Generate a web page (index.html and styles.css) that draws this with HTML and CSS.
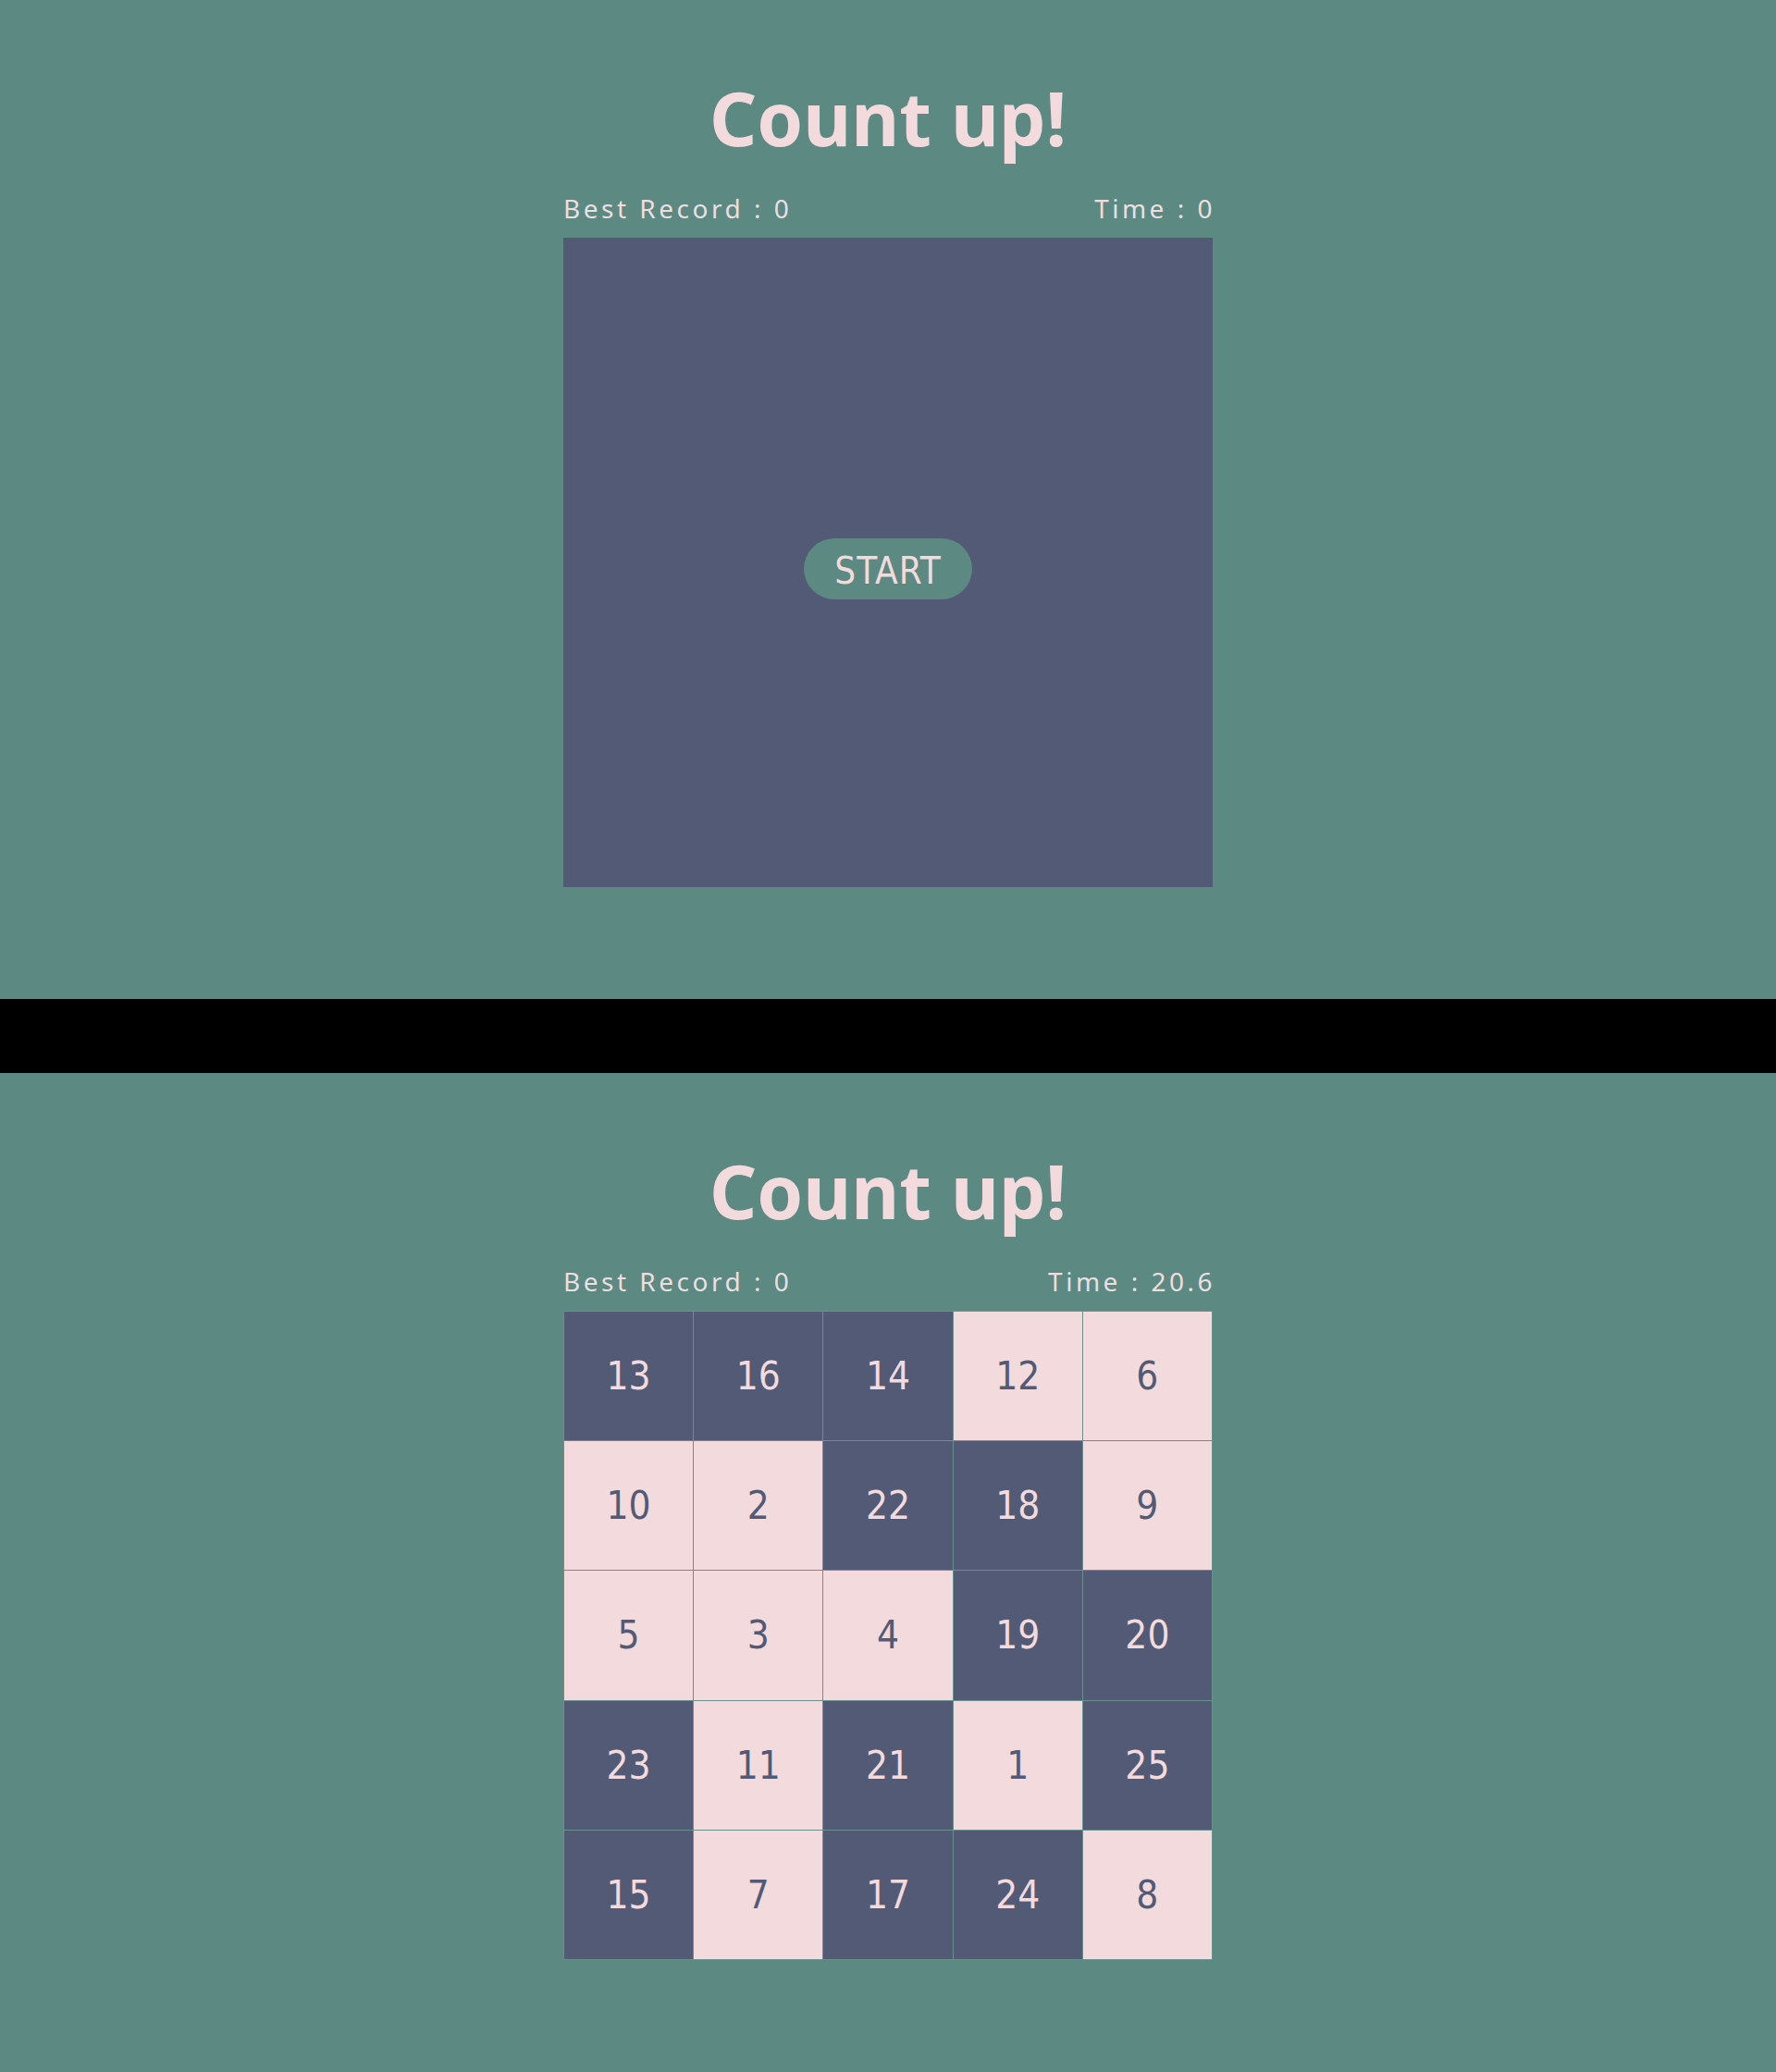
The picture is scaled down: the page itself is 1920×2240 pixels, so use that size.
FILE: index.html
```html
<!DOCTYPE html>
<html lang="en">
<head>
<meta charset="utf-8">
<title>Count up!</title>
<link rel="stylesheet" href="styles.css">
</head>
<body>
<section class="screen">
  <h1 class="title">Count up!</h1>
  <div class="stats">
    <span class="stat">Best Record : 0</span>
    <span class="stat">Time : 0</span>
  </div>
  <div class="board board-idle">
    <button class="start-btn">START</button>
  </div>
</section>
<div class="divider"></div>
<section class="screen">
  <h1 class="title">Count up!</h1>
  <div class="stats">
    <span class="stat">Best Record : 0</span>
    <span class="stat">Time : 20.6</span>
  </div>
  <div class="board board-grid">
    <div class="cell dark">13</div>
    <div class="cell dark">16</div>
    <div class="cell dark">14</div>
    <div class="cell light">12</div>
    <div class="cell light">6</div>
    <div class="cell light">10</div>
    <div class="cell light">2</div>
    <div class="cell dark">22</div>
    <div class="cell dark">18</div>
    <div class="cell light">9</div>
    <div class="cell light">5</div>
    <div class="cell light">3</div>
    <div class="cell light">4</div>
    <div class="cell dark">19</div>
    <div class="cell dark">20</div>
    <div class="cell dark">23</div>
    <div class="cell light">11</div>
    <div class="cell dark">21</div>
    <div class="cell light">1</div>
    <div class="cell dark">25</div>
    <div class="cell dark">15</div>
    <div class="cell light">7</div>
    <div class="cell dark">17</div>
    <div class="cell dark">24</div>
    <div class="cell light">8</div>
  </div>
</section>
</body>
</html>
```

FILE: styles.css
```css
html, body {
  margin: 0;
  padding: 0;
}
body {
  background: #000;
  width: 1920px;
}
.screen {
  height: 1080px;
  background: #5c8982;
  display: flex;
  flex-direction: column;
  align-items: center;
  padding-top: 87px;
  box-sizing: border-box;
}
.divider {
  height: 80px;
  background: #000;
}
.title {
  margin: 0;
  font-family: "Noto Sans", "Open Sans", sans-serif;
  font-weight: 700;
  font-size: 80px;
  line-height: 80px;
  color: #f2dadd;
  letter-spacing: 0;
}
.stats {
  width: 702px;
  margin-top: 44px;
  display: flex;
  justify-content: space-between;
  font-family: "Noto Sans", "Open Sans", sans-serif;
  font-size: 28px;
  line-height: 28px;
  letter-spacing: 3.5px;
  color: #ecdfe0;
}
.stat:last-child {
  margin-right: -3px;
}
.board {
  width: 702px;
  height: 702px;
  margin-top: 18px;
  box-sizing: border-box;
}
.board-idle {
  background: #525a75;
  display: flex;
  align-items: center;
  justify-content: center;
}
.start-btn {
  width: 182px;
  height: 66px;
  margin-top: 14px;
  border: none;
  border-radius: 33px;
  background: #5c8982;
  color: #f2dadd;
  font-family: "Liberation Sans Narrow", "DejaVu Sans Condensed", "DejaVu Sans", sans-serif;
  font-stretch: condensed;
  font-size: 40px;
  letter-spacing: 1px;
  padding: 4px 0 0;
  cursor: pointer;
}
.board-grid {
  display: grid;
  grid-template-columns: repeat(5, 1fr);
  grid-template-rows: repeat(5, 1fr);
  gap: 1px;
  padding: 1px;
  background: #6a8f8c;
}
.cell {
  display: flex;
  align-items: center;
  justify-content: center;
  font-family: "Liberation Sans Narrow", "DejaVu Sans Condensed", "DejaVu Sans", sans-serif;
  font-stretch: condensed;
  font-size: 42px;
  letter-spacing: 0;
}
.cell.dark {
  background: #525a75;
  color: #f2dadd;
}
.cell.light {
  background: #f2dadd;
  color: #525a75;
}
```
